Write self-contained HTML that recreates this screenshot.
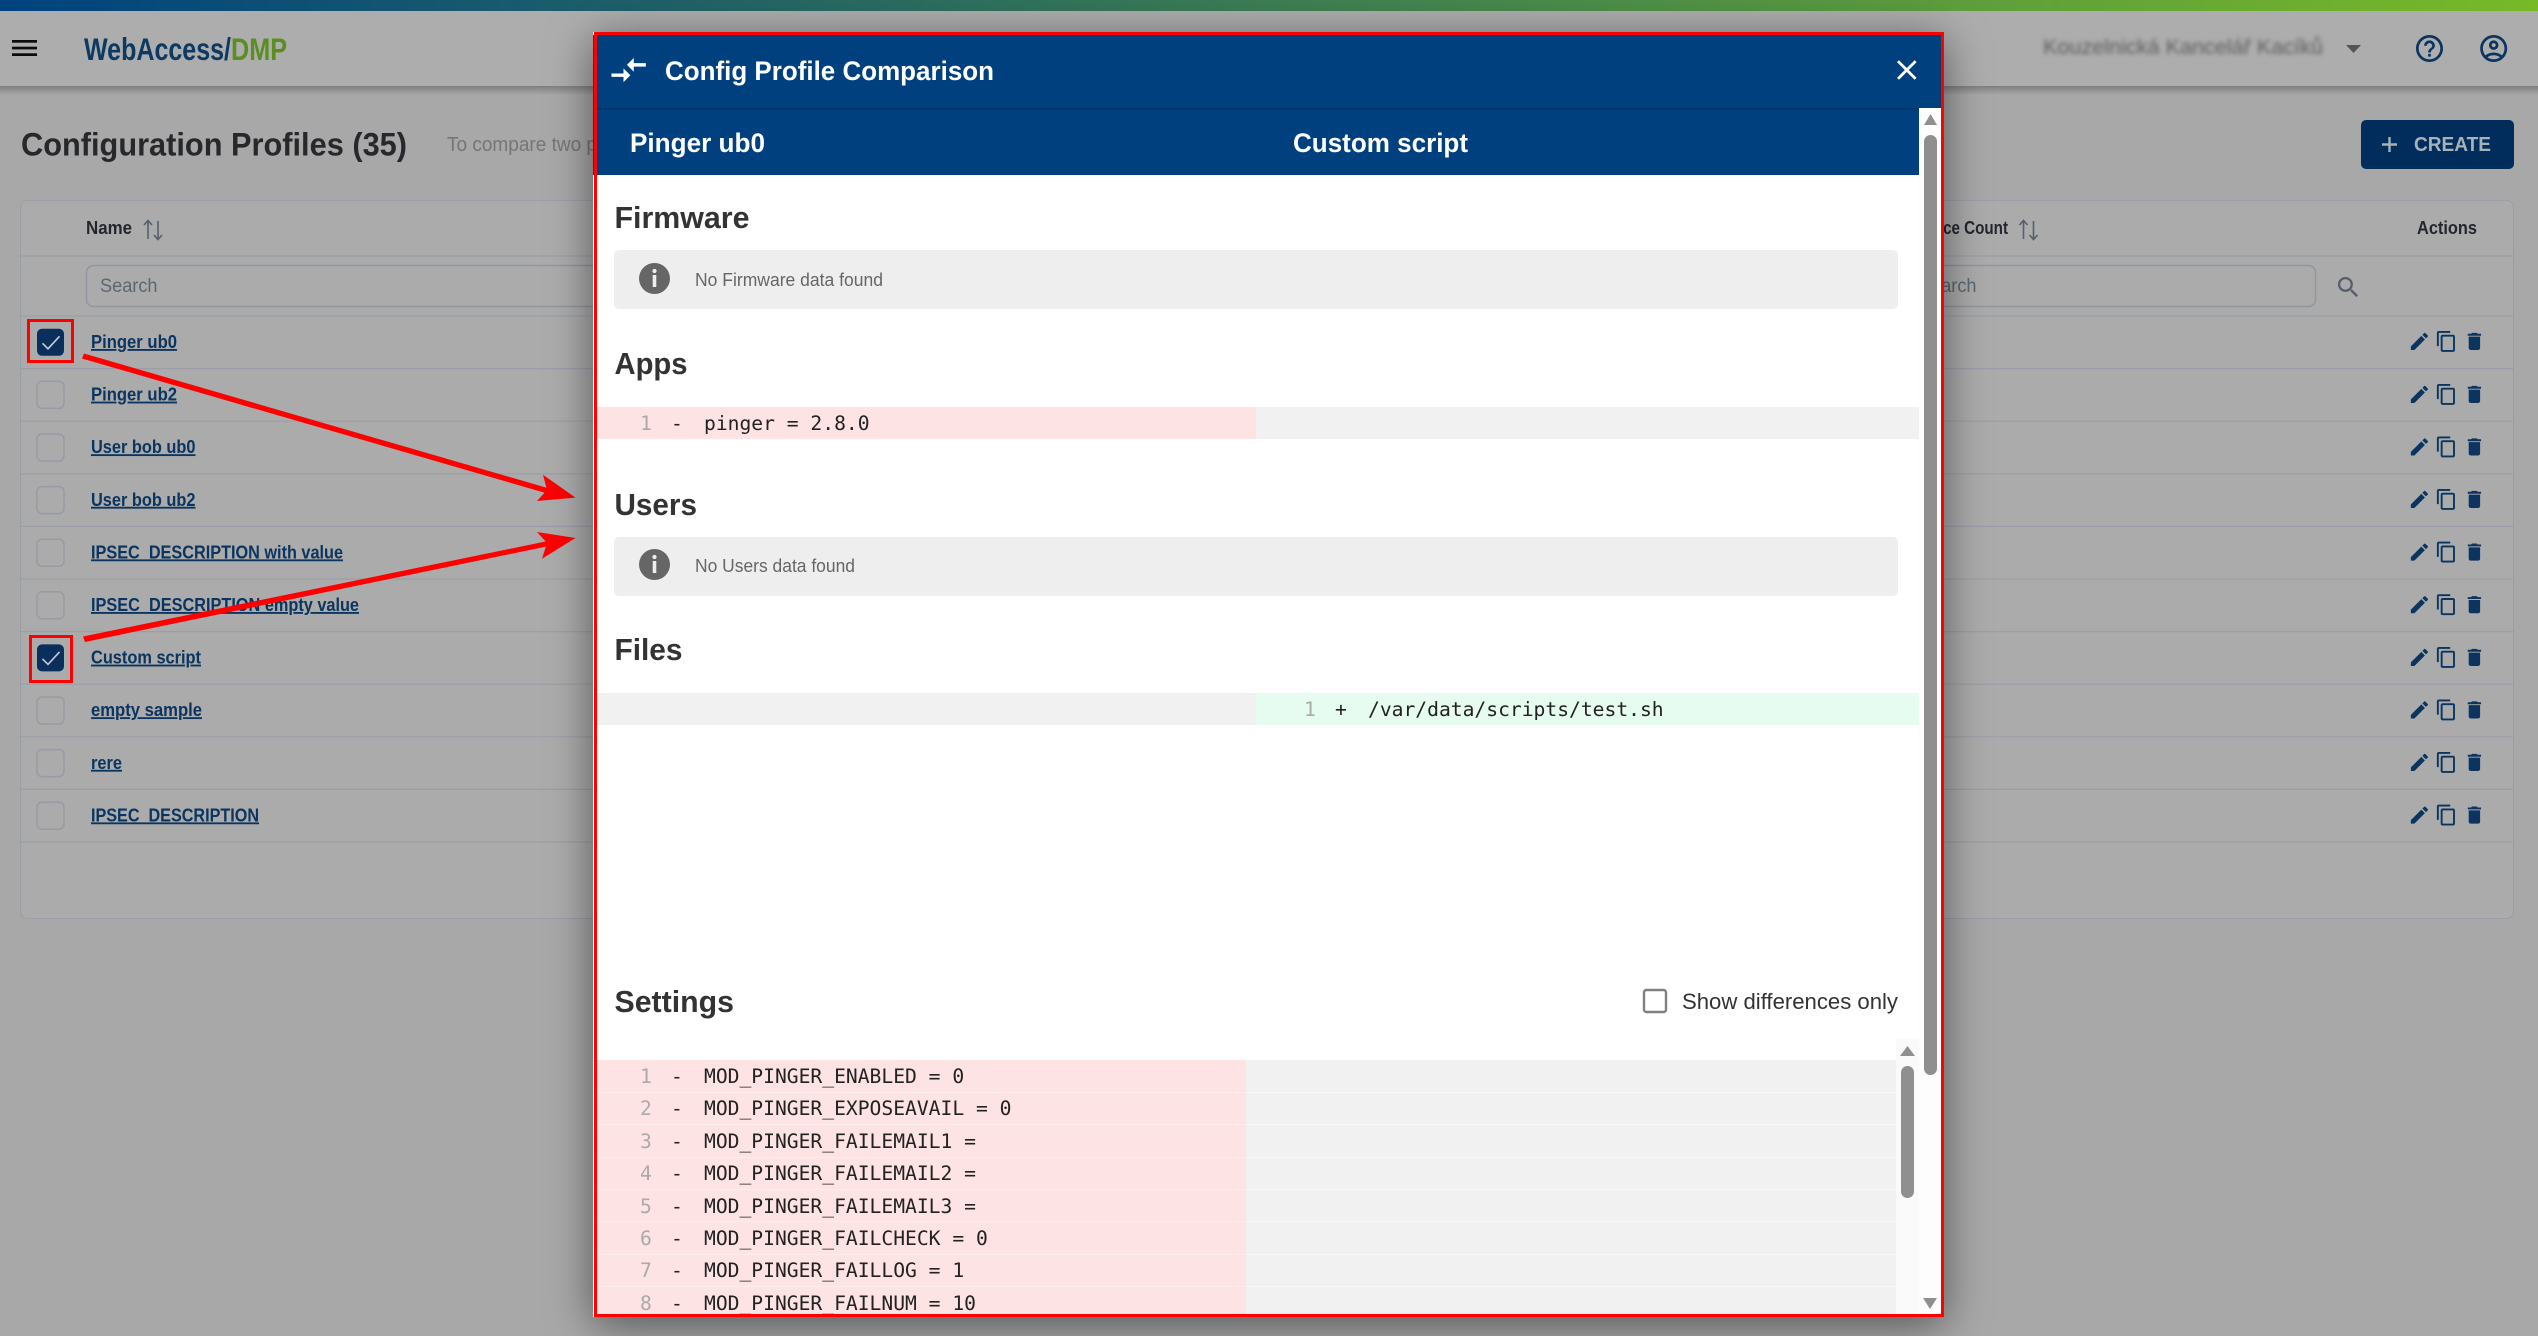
<!DOCTYPE html>
<html lang="en"><head><meta charset="utf-8"><title>Config Profile Comparison</title>
<style>
html,body{margin:0;padding:0;width:2538px;height:1336px;overflow:hidden;background:#a8a8a8}
svg{display:block;position:absolute;left:0;top:0}
text{font-family:"Liberation Sans",sans-serif;white-space:pre}
.b{font-weight:700}
.l{font-size:18.5px;font-weight:700;fill:#0b3560;text-decoration:underline}
.h{font-size:31px;font-weight:700;fill:#333}
.w{font-size:27px;font-weight:700;fill:#fff}
.th{font-size:18.5px;font-weight:700;fill:#23272d}
.n{font-size:18.5px;fill:#666}
.m{font-family:"DejaVu Sans Mono","Liberation Mono",monospace;font-size:19.65px;fill:#222}
.g{fill:#adadad}
</style></head><body>
<svg width="2538" height="1336" viewBox="0 0 2538 1336" xmlns="http://www.w3.org/2000/svg">
<defs>
<linearGradient id="top" x1="0" x2="1" y1="0" y2="0"><stop offset="0" stop-color="#00427f"/><stop offset="1" stop-color="#78b928"/></linearGradient>
<linearGradient id="hs" x1="0" x2="0" y1="0" y2="1"><stop offset="0" stop-color="#7f7f7f"/><stop offset="1" stop-color="#a8a8a8"/></linearGradient>
<filter id="ms" x="-10%" y="-10%" width="120%" height="120%"><feDropShadow dx="0" dy="8" stdDeviation="22" flood-color="#000" flood-opacity=".5"/></filter>
<filter id="bl" x="-5%" y="-30%" width="110%" height="160%"><feGaussianBlur stdDeviation="2"/></filter>
<clipPath id="mc"><rect x="597" y="35" width="1344" height="1279"/></clipPath>
<g id="acts" fill="#0b3560">
<path transform="translate(2408 0) scale(.95)" d="M3 17.25V21h3.75L17.81 9.94l-3.75-3.75L3 17.25zM20.71 7.04a1 1 0 000-1.41l-2.34-2.34a1 1 0 00-1.41 0l-1.83 1.83 3.75 3.75 1.83-1.83z"/>
<path transform="translate(2435 0) scale(.95)" d="M16 1H4c-1.1 0-2 .9-2 2v14h2V3h12V1zm3 4H8c-1.1 0-2 .9-2 2v14c0 1.1.9 2 2 2h11c1.1 0 2-.9 2-2V7c0-1.1-.9-2-2-2zm0 16H8V7h11v14z"/>
<path transform="translate(2463 0) scale(.95)" d="M6 19c0 1.1.9 2 2 2h8c1.1 0 2-.9 2-2V7H6v12zM19 4h-3.5l-1-1h-5l-1 1H5v2h14V4z"/>
</g>
<rect id="cb" x="37" y="-13.5" width="27" height="27" rx="5" fill="none" stroke="#989ba3" stroke-width="1.5"/>
<g id="cbc"><rect x="37" y="-13.5" width="27" height="27" rx="5" fill="#0a2f5c"/><path d="M42.5 1 48 6.5 59.5-6" fill="none" stroke="#c8cdd3" stroke-width="1.6"/></g>
<g id="sort" fill="none" stroke="#56606c" stroke-width="1.6"><path d="M4 1v18M0 5l4-4.500 4 4.500"/><path d="M14 1v18M10 15l4 4.500 4-4.500"/></g>
<g id="info"><circle cx="0" cy="0" r="15.500" fill="#666"/><rect x="-1.800" y="-3.500" width="3.600" height="12" fill="#eee"/><circle cx="0" cy="-7.500" r="2.100" fill="#eee"/></g>
</defs>

<!-- App shell behind overlay -->
<rect width="2538" height="1336" fill="#a8a8a8"/>
<rect y="11" width="2538" height="75" fill="#adadad"/>
<rect y="86" width="2538" height="9" fill="url(#hs)"/>
<rect width="2538" height="11" fill="url(#top)"/>
<g fill="#0c0c0c"><rect x="12" y="40" width="25" height="2.700"/><rect x="12" y="46.700" width="25" height="2.700"/><rect x="12" y="53.300" width="25" height="2.700"/></g>
<text x="84" y="60" class="b" font-size="31.500" fill="#0d3a63" textLength="147" lengthAdjust="spacingAndGlyphs">WebAccess/</text>
<text x="231" y="60" class="b" font-size="31.500" fill="#5a8f20" textLength="56" lengthAdjust="spacingAndGlyphs">DMP</text>
<text x="2043" y="54" font-size="21" fill="#5c5c5c" filter="url(#bl)" textLength="280" lengthAdjust="spacingAndGlyphs">Kouzelnická Kancelář Kacíků</text>
<path d="M2346 45h15l-7.500 8z" fill="#555"/>
<path transform="translate(2413.300 32.300) scale(1.350)" fill="#0b3560" d="M11 18h2v-2h-2v2zm1-16C6.480 2 2 6.480 2 12s4.480 10 10 10 10-4.480 10-10S17.520 2 12 2zm0 18c-4.410 0-8-3.590-8-8s3.590-8 8-8 8 3.590 8 8-3.590 8-8 8zm0-14c-2.210 0-4 1.790-4 4h2c0-1.100.900-2 2-2s2 .900 2 2c0 2-3 1.750-3 5h2c0-2.250 3-2.500 3-5 0-2.210-1.790-4-4-4z"/>
<path transform="translate(2477.500 32.300) scale(1.350)" fill="#0b3560" d="M12 2C6.480 2 2 6.480 2 12s4.480 10 10 10 10-4.480 10-10S17.520 2 12 2zM7.350 18.500C8.660 17.560 10.260 17 12 17s3.340.560 4.650 1.500c-1.310.940-2.910 1.500-4.650 1.500s-3.340-.560-4.650-1.500zm10.790-1.380C16.450 15.800 14.320 15 12 15s-4.450.800-6.140 2.120C4.700 15.730 4 13.950 4 12c0-4.420 3.580-8 8-8s8 3.580 8 8c0 1.950-.700 3.730-1.860 5.120zM12 6c-1.930 0-3.500 1.570-3.500 3.500S10.070 13 12 13s3.500-1.570 3.500-3.500S13.930 6 12 6zm0 5c-.830 0-1.500-.670-1.500-1.500S11.170 8 12 8s1.500.670 1.500 1.500S12.830 11 12 11z"/>

<text x="21" y="155.500" class="b" font-size="32" fill="#26282b" textLength="386" lengthAdjust="spacingAndGlyphs">Configuration Profiles (35)</text>
<text x="447" y="151" font-size="20" fill="#767676" textLength="150" lengthAdjust="spacingAndGlyphs">To compare two p</text>
<rect x="2361" y="120" width="153" height="49" rx="5" fill="#002d5c"/>
<path d="M2382 144.500h15M2389.500 137v15" stroke="#a8b0b8" stroke-width="2.400" fill="none"/>
<text x="2414" y="151" class="b" font-size="20" fill="#a8b0b8" textLength="77" lengthAdjust="spacingAndGlyphs">CREATE</text>

<!-- Table card -->
<rect x="20.500" y="200.500" width="2493" height="718" rx="7" fill="#ababab" stroke="#9a9ea6"/>
<g stroke="#9a9ea6" stroke-width="1.200">
<path d="M21 256h2492M21 316h2492M21 368.600h2492M21 421.200h2492M21 473.800h2492M21 526.400h2492M21 579h2492M21 631.600h2492M21 684.200h2492M21 736.800h2492M21 789.400h2492M21 842h2492"/>
</g>
<text x="86" y="234" class="th" textLength="46" lengthAdjust="spacingAndGlyphs">Name</text>
<use href="#sort" x="144" y="220"/>
<text x="1911" y="234" class="th" textLength="97" lengthAdjust="spacingAndGlyphs">Device Count</text>
<use href="#sort" x="2019.500" y="220"/>
<text x="2417" y="234" class="th" textLength="60" lengthAdjust="spacingAndGlyphs">Actions</text>
<rect x="86.500" y="265.500" width="2229" height="41" rx="7" fill="#ababab" stroke="#92969e" stroke-width="1.500"/>
<text x="100" y="292" font-size="19" fill="#5c6670" textLength="57.500" lengthAdjust="spacingAndGlyphs">Search</text>
<text x="1919" y="292" font-size="19" fill="#5c6670" textLength="57.500" lengthAdjust="spacingAndGlyphs">Search</text>
<path transform="translate(2334.500 273.500) scale(1.150)" fill="#555e6a" d="M15.500 14h-.790l-.280-.270A6.471 6.471 0 0016 9.500 6.500 6.500 0 109.500 16c1.610 0 3.090-.590 4.230-1.570l.270.280v.790l5 4.990L20.490 19l-4.990-5zm-6 0C7.010 14 5 11.990 5 9.500S7.010 5 9.500 5 14 7.010 14 9.500 11.990 14 9.500 14z"/>

<use href="#cbc" y="342.300"/><text x="91" y="348" class="l" textLength="86" lengthAdjust="spacingAndGlyphs">Pinger ub0</text><use href="#acts" y="330"/>
<use href="#cb" y="394.900"/><text x="91" y="400.600" class="l" textLength="86" lengthAdjust="spacingAndGlyphs">Pinger ub2</text><use href="#acts" y="383"/>
<use href="#cb" y="447.500"/><text x="91" y="453.200" class="l" textLength="104.500" lengthAdjust="spacingAndGlyphs">User bob ub0</text><use href="#acts" y="435.500"/>
<use href="#cb" y="500.100"/><text x="91" y="505.800" class="l" textLength="104.500" lengthAdjust="spacingAndGlyphs">User bob ub2</text><use href="#acts" y="488"/>
<use href="#cb" y="552.700"/><text x="91" y="558.400" class="l" textLength="252" lengthAdjust="spacingAndGlyphs">IPSEC_DESCRIPTION with value</text><use href="#acts" y="540.700"/>
<use href="#cb" y="605.300"/><text x="91" y="611" class="l" textLength="268" lengthAdjust="spacingAndGlyphs">IPSEC_DESCRIPTION empty value</text><use href="#acts" y="593.300"/>
<use href="#cbc" y="657.900"/><text x="91" y="663.600" class="l" textLength="110" lengthAdjust="spacingAndGlyphs">Custom script</text><use href="#acts" y="646"/>
<use href="#cb" y="710.500"/><text x="91" y="716.200" class="l" textLength="111" lengthAdjust="spacingAndGlyphs">empty sample</text><use href="#acts" y="698.500"/>
<use href="#cb" y="763.100"/><text x="91" y="768.800" class="l" textLength="31" lengthAdjust="spacingAndGlyphs">rere</text><use href="#acts" y="751"/>
<use href="#cb" y="815.700"/><text x="91" y="821.400" class="l" textLength="168" lengthAdjust="spacingAndGlyphs">IPSEC_DESCRIPTION</text><use href="#acts" y="803.700"/>

<!-- Annotations -->
<g fill="none" stroke="#f00" stroke-width="3">
<rect x="28.500" y="320.500" width="44" height="41"/>
<rect x="30.500" y="636.500" width="41" height="45"/>
</g>
<g fill="#f00" stroke="none">
<path d="M82 355.500 549 491 551 486 84 350.500z" transform="translate(0 3)"/>
<path d="M575.500 497.600 543 474.700 547 490 537 501z"/>
<path d="M83 636.500 548 541 549 546 85 642z"/>
<path d="M575.500 538 537 532 547 543 542 558.700z"/>
</g>

<!-- Modal -->
<rect x="593" y="32" width="1351" height="1285" fill="#fff" filter="url(#ms)"/>
<rect x="593" y="35" width="4" height="140" fill="#00407f"/>
<g clip-path="url(#mc)">
<rect x="597" y="35" width="1344" height="73" fill="#00407f"/>
<rect x="597" y="108" width="1322" height="2" fill="#03386b"/>
<rect x="597" y="110" width="1322" height="65" fill="#00407f"/>
<rect x="1919" y="108" width="22" height="1206" fill="#fdfdfd"/>
<path d="M1924 125l6.500-11 6.500 11z" fill="#8f8f8f"/>
<rect x="1924" y="135" width="13" height="940" rx="6.500" fill="#8f8f8f"/>
<path d="M1923 1298h14l-7 11z" fill="#8f8f8f"/>

<path transform="translate(608 49.400) scale(1.720)" fill="#fff" d="M9.010 14H2v2h7.010v3L13 15l-3.990-4v3zm5.980-1v-3H22V8h-7.010V5L11 9l3.990 4z"/>
<text x="665" y="80" class="w" textLength="329" lengthAdjust="spacingAndGlyphs">Config Profile Comparison</text>
<path transform="translate(1890 53.200) scale(1.400)" fill="#fff" d="M19 6.410L17.590 5 12 10.590 6.410 5 5 6.410 10.590 12 5 17.590 6.410 19 12 13.410 17.590 19 19 17.590 13.410 12z"/>
<text x="630" y="152" class="w" textLength="135" lengthAdjust="spacingAndGlyphs">Pinger ub0</text>
<text x="1293" y="152" class="w" textLength="175" lengthAdjust="spacingAndGlyphs">Custom script</text>

<text x="614.500" y="228" class="h" textLength="135" lengthAdjust="spacingAndGlyphs">Firmware</text>
<rect x="614" y="250" width="1284" height="59" rx="5" fill="#eee"/>
<use href="#info" x="654.500" y="278.500"/>
<text x="695" y="286" class="n" textLength="188" lengthAdjust="spacingAndGlyphs">No Firmware data found</text>

<text x="614.500" y="374" class="h" textLength="73" lengthAdjust="spacingAndGlyphs">Apps</text>
<rect x="597" y="407" width="659" height="32" fill="#fde3e4"/>
<rect x="1256" y="407" width="663" height="32" fill="#f1f1f1"/>
<text x="640" y="430" class="m" style="fill:#aaa">1</text><text x="671" y="430" class="m">-</text><text x="704" y="430" class="m">pinger = 2.8.0</text>

<text x="614.500" y="515" class="h" textLength="82.500" lengthAdjust="spacingAndGlyphs">Users</text>
<rect x="614" y="537" width="1284" height="59" rx="5" fill="#eee"/>
<use href="#info" x="654.500" y="564.500"/>
<text x="695" y="572" class="n" textLength="160" lengthAdjust="spacingAndGlyphs">No Users data found</text>

<text x="614.500" y="660" class="h" textLength="68" lengthAdjust="spacingAndGlyphs">Files</text>
<rect x="597" y="693" width="659" height="32" fill="#f1f1f1"/>
<rect x="1256" y="693" width="663" height="32" fill="#e6fcf0"/>
<text x="1304" y="716" class="m" style="fill:#aaa">1</text><text x="1335" y="716" class="m">+</text><text x="1368" y="716" class="m">/var/data/scripts/test.sh</text>

<text x="614.500" y="1012" class="h" textLength="119.500" lengthAdjust="spacingAndGlyphs">Settings</text>
<rect x="1644" y="990" width="22" height="22" rx="2.500" fill="#fff" stroke="#808080" stroke-width="2.400"/>
<text x="1682" y="1009" font-size="22" fill="#333" textLength="216" lengthAdjust="spacingAndGlyphs">Show differences only</text>

<rect x="597" y="1060" width="649" height="254" fill="#fde3e4"/>
<rect x="1246" y="1060" width="650" height="254" fill="#f1f1f1"/>
<rect x="1896" y="1039" width="23" height="275" fill="#fafafa"/>
<path d="M597 1092.500h649M597 1124.500h649M597 1157.500h649M597 1189.500h649M597 1221.500h649M597 1254.500h649M597 1286.500h649" stroke="#fdecec" stroke-width="1"/>
<path d="M1246 1092.500h650M1246 1124.500h650M1246 1157.500h650M1246 1189.500h650M1246 1221.500h650M1246 1254.500h650M1246 1286.500h650" stroke="#f8f8f8" stroke-width="1"/>
<path d="M1900 1056l7.500-10 7.500 10z" fill="#8f8f8f"/>
<rect x="1901" y="1066" width="13" height="132" rx="6.500" fill="#8f8f8f"/>

<text x="640" y="1083" class="m" style="fill:#aaa">1</text><text x="671" y="1083" class="m">-</text><text x="704" y="1083" class="m">MOD_PINGER_ENABLED = 0</text>
<text x="640" y="1115" class="m" style="fill:#aaa">2</text><text x="671" y="1115" class="m">-</text><text x="704" y="1115" class="m">MOD_PINGER_EXPOSEAVAIL = 0</text>
<text x="640" y="1148" class="m" style="fill:#aaa">3</text><text x="671" y="1148" class="m">-</text><text x="704" y="1148" class="m">MOD_PINGER_FAILEMAIL1 =</text>
<text x="640" y="1180" class="m" style="fill:#aaa">4</text><text x="671" y="1180" class="m">-</text><text x="704" y="1180" class="m">MOD_PINGER_FAILEMAIL2 =</text>
<text x="640" y="1213" class="m" style="fill:#aaa">5</text><text x="671" y="1213" class="m">-</text><text x="704" y="1213" class="m">MOD_PINGER_FAILEMAIL3 =</text>
<text x="640" y="1245" class="m" style="fill:#aaa">6</text><text x="671" y="1245" class="m">-</text><text x="704" y="1245" class="m">MOD_PINGER_FAILCHECK = 0</text>
<text x="640" y="1277" class="m" style="fill:#aaa">7</text><text x="671" y="1277" class="m">-</text><text x="704" y="1277" class="m">MOD_PINGER_FAILLOG = 1</text>
<text x="640" y="1310" class="m" style="fill:#aaa">8</text><text x="671" y="1310" class="m">-</text><text x="704" y="1310" class="m">MOD_PINGER_FAILNUM = 10</text>
</g>
<rect x="595.500" y="33.500" width="1347" height="1282" fill="none" stroke="#f00" stroke-width="3"/>
</svg>
</body></html>
